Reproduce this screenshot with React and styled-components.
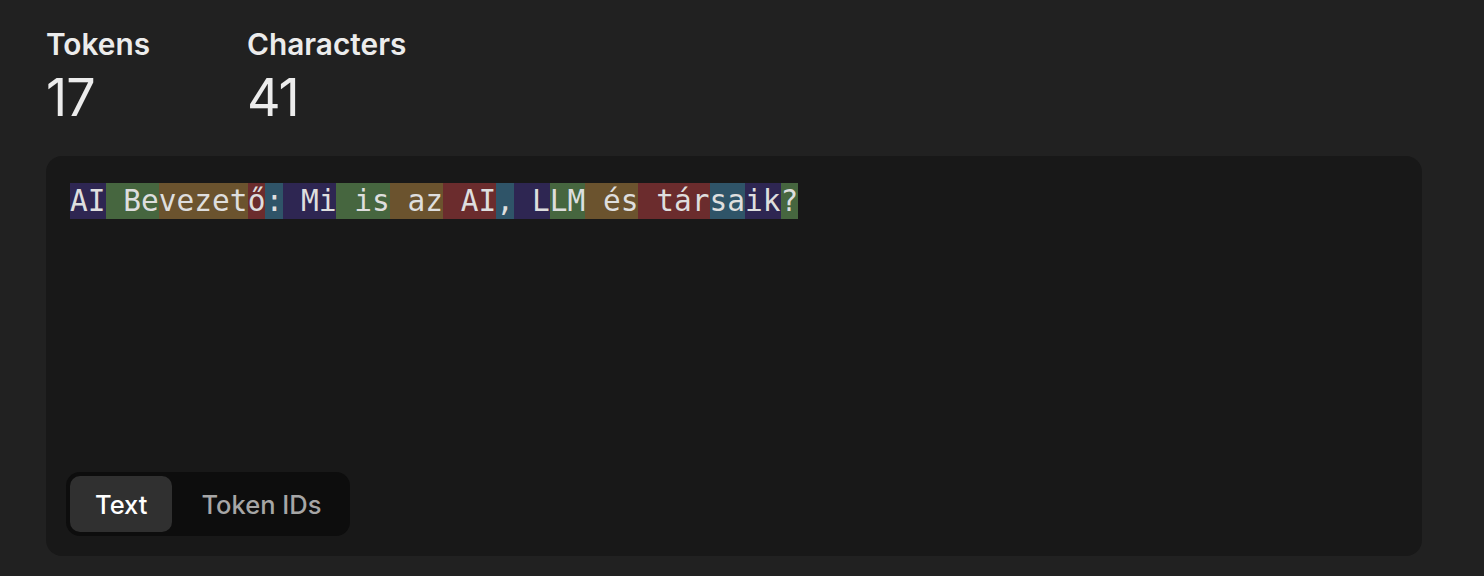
import React, { useState } from 'react'
import styled, { createGlobalStyle } from 'styled-components'

const GlobalStyle = createGlobalStyle`
  html, body {
    margin: 0;
    background: #212121;
    color: #ececec;
    font-family: Inter, "Noto Sans", sans-serif;
  }
`

const palette = ['#2e2652', '#46663f', '#6b532e', '#6b2c2d', '#2f5468']

const tokens = [
  'AI', ' Be', 'vezet', 'ő', ':', ' Mi', ' is', ' az', ' AI', ',',
  ' L', 'LM', ' és', ' tár', 'sa', 'ik', '?',
]

const App = () => {
  const [view, setView] = useState('text')
  const charCount = tokens.join('').length

  return (
    <Page>
      <GlobalStyle />
      <Stats>
        <Stat>
          <StatLabel>Tokens</StatLabel>
          <StatValue>{tokens.length}</StatValue>
        </Stat>
        <Stat>
          <StatLabel>Characters</StatLabel>
          <StatValue>{charCount}</StatValue>
        </Stat>
      </Stats>
      <Card>
        <TokenText>
          {tokens.map((t, i) => (
            <Token key={i} $bg={palette[i % palette.length]}>
              {view === 'text' ? t : i}
            </Token>
          ))}
        </TokenText>
        <Tabs>
          <Tab $active={view === 'text'} onClick={() => setView('text')}>
            Text
          </Tab>
          <Tab $active={view === 'ids'} onClick={() => setView('ids')}>
            Token IDs
          </Tab>
        </Tabs>
      </Card>
    </Page>
  )
}

export default App

const Page = styled.main`
  padding: 26px 62px 20px 46px;
`
const Stats = styled.div`
  display: grid;
  grid-template-columns: 201px auto;
  margin-bottom: 22px;
`
const Stat = styled.div`
  display: flex;
  flex-direction: column;
`
const StatLabel = styled.div`
  font-size: 29.8px;
  font-weight: 600;
  line-height: 36px;
  color: #ececec;
`
const StatValue = styled.div`
  font-size: 52px;
  font-weight: 400;
  line-height: 72px;
  letter-spacing: -1px;
  color: #ececec;
`
const Card = styled.section`
  height: 400px;
  box-sizing: border-box;
  background: #181818;
  border-radius: 16px;
  padding: 20px;
  display: flex;
  flex-direction: column;
  justify-content: space-between;
  align-items: flex-start;
`
const TokenText = styled.div`
  margin: 7px 4px 0;
  font-family: "DejaVu Sans Mono", "Liberation Mono", monospace;
  font-size: 29.5px;
  line-height: 36px;
  color: #dedede;
  white-space: pre-wrap;
`
const Token = styled.span`
  background: ${(p) => p.$bg};
  display: inline-block;
  height: 36px;
`
const Tabs = styled.div`
  display: flex;
  gap: 4px;
  padding: 4px;
  background: #0d0d0d;
  border-radius: 14px;
`
const Tab = styled.button`
  height: 56px;
  padding: 0 25px;
  border: none;
  border-radius: 10px;
  font-family: Inter, "Noto Sans", sans-serif;
  font-size: 25.5px;
  font-weight: 500;
  cursor: pointer;
  background: ${(p) => (p.$active ? '#303030' : 'transparent')};
  color: ${(p) => (p.$active ? '#ffffff' : '#a6a6a6')};
`
